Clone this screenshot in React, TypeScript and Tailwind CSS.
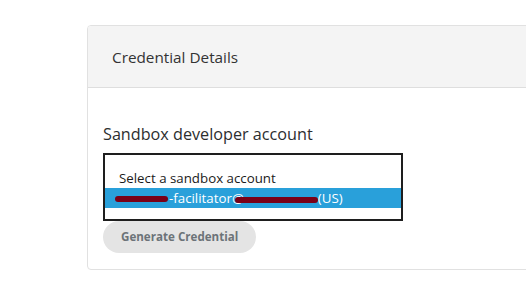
import React from 'react';

const App: React.FC = () => {
  return (
    <div className="w-[526px] h-[282px] overflow-hidden bg-white" style={{ fontFamily: '"Open Sans", sans-serif' }}>
      <div className="ml-[87px] mt-[25px] w-[470px] h-[245px] border border-[#e1e1e1] rounded-[4px] overflow-hidden">
        <div className="h-[62px] bg-[#f4f4f4] border-b border-[#dedede] flex items-center pl-[24px]">
          <h2 className="text-[15.3px] text-[#333333] leading-none pt-[2px]">Credential Details</h2>
        </div>
        <div className="pl-[15px] pt-[34px]">
          <h3 className="text-[16.2px] font-medium text-[#2c2e2f] leading-[24px] mb-[7px]">Sandbox developer account</h3>
          <div className="w-[300px] h-[68px] border-2 border-[#1e1e1e] pt-[13px] bg-white text-[13.3px] leading-[20px]">
            <div className="pl-[14px] text-[#1a1a1a]">Select a sandbox account</div>
            <div className="relative h-[20px] bg-[#29a0da] text-white pl-[12px] flex items-center">
              <span className="inline-block w-[52px]" />
              <span>-facilitator@</span>
              <span className="inline-block w-[74px]" />
              <span>(US)</span>
              <span className="absolute left-[10px] top-[8px] w-[53px] h-[6px] rounded-full bg-[#7a0016]" />
              <span className="absolute left-[130px] top-[9px] w-[83px] h-[6px] rounded-full bg-[#7a0016]" />
            </div>
          </div>
          <button className="h-[32px] px-[18px] rounded-full bg-[#e4e4e4] text-[#6c7378] text-[11.6px] font-bold">
            Generate Credential
          </button>
        </div>
      </div>
    </div>
  );
};

export default App;
